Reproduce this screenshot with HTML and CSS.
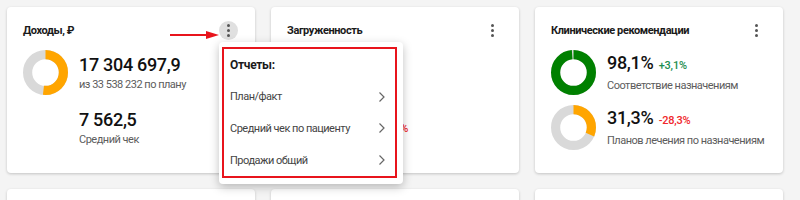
FILE: index.html
```html
<!DOCTYPE html>
<html lang="ru">
<head>
<meta charset="utf-8">
<title>Dashboard</title>
<link rel="stylesheet" href="styles.css">
</head>
<body>
<div class="grid">
  <div class="card">
    <div class="head">
      <div class="title">Доходы, ₽</div>
      <div class="kebab active"><i></i><i></i><i></i></div>
    </div>
    <div class="rows">
      <div class="row">
        <svg class="donut" viewBox="0 0 44 44">
          <circle cx="22" cy="22" r="17.5" fill="none" stroke="#d9d9d9" stroke-width="9"/>
          <circle cx="22" cy="22" r="17.5" fill="none" stroke="#ffa500" stroke-width="9" stroke-dasharray="56.7 110" transform="rotate(-90 22 22)"/>
        </svg>
        <div class="text">
          <div class="value">17 304 697,9</div>
          <div class="sub">из 33 538 232 по плану</div>
        </div>
      </div>
      <div class="row">
        <div class="donut"></div>
        <div class="text">
          <div class="value">7 562,5</div>
          <div class="sub">Средний чек</div>
        </div>
      </div>
    </div>
    <svg class="arrow" viewBox="0 0 50 10" width="50" height="10">
      <line x1="0" y1="5" x2="38" y2="5" stroke="#e8141c" stroke-width="2"/>
      <polygon points="36,1 49,5 36,9" fill="#e8141c"/>
    </svg>
    <div class="menu">
      <div class="menu-box">
        <div class="menu-row menu-head">Отчеты:</div>
        <div class="menu-row">План/факт<svg class="chev" viewBox="0 0 6 10" width="6" height="10"><polyline points="0.5,0.5 5,5 0.5,9.5" fill="none" stroke="#666" stroke-width="1.2"/></svg></div>
        <div class="menu-row">Средний чек по пациенту<svg class="chev" viewBox="0 0 6 10" width="6" height="10"><polyline points="0.5,0.5 5,5 0.5,9.5" fill="none" stroke="#666" stroke-width="1.2"/></svg></div>
        <div class="menu-row">Продажи общий<svg class="chev" viewBox="0 0 6 10" width="6" height="10"><polyline points="0.5,0.5 5,5 0.5,9.5" fill="none" stroke="#666" stroke-width="1.2"/></svg></div>
      </div>
    </div>
  </div>

  <div class="card">
    <div class="head">
      <div class="title">Загруженность</div>
      <div class="kebab"><i></i><i></i><i></i></div>
    </div>
    <div class="rows">
      <div class="row">
        <svg class="donut" viewBox="0 0 44 44">
          <circle cx="22" cy="22" r="17.5" fill="none" stroke="#d9d9d9" stroke-width="9"/>
          <circle cx="22" cy="22" r="17.5" fill="none" stroke="#008000" stroke-width="9" stroke-dasharray="80 110" transform="rotate(-90 22 22)"/>
        </svg>
        <div class="text">
          <div class="value">72,4%</div>
        </div>
      </div>
      <div class="row">
        <svg class="donut" viewBox="0 0 44 44">
          <circle cx="22" cy="22" r="17.5" fill="none" stroke="#d9d9d9" stroke-width="9"/>
          <circle cx="22" cy="22" r="17.5" fill="none" stroke="#ffa500" stroke-width="9" stroke-dasharray="50 110" transform="rotate(-90 22 22)"/>
        </svg>
        <div class="text">
          <div class="value">5,6% <span class="change down">-12%</span></div>
        </div>
      </div>
    </div>
  </div>

  <div class="card">
    <div class="head">
      <div class="title">Клинические рекомендации</div>
      <div class="kebab"><i></i><i></i><i></i></div>
    </div>
    <div class="rows">
      <div class="row">
        <svg class="donut" viewBox="0 0 44 44">
          <circle cx="22" cy="22" r="17.5" fill="none" stroke="#d9d9d9" stroke-width="9"/>
          <circle cx="22" cy="22" r="17.5" fill="none" stroke="#008000" stroke-width="9" stroke-dasharray="107.9 110" transform="rotate(-90 22 22)"/>
        </svg>
        <div class="text">
          <div class="value">98,1% <span class="change up">+3,1%</span></div>
          <div class="sub">Соответствие назначениям</div>
        </div>
      </div>
      <div class="row">
        <svg class="donut" viewBox="0 0 44 44">
          <circle cx="22" cy="22" r="17.5" fill="none" stroke="#d9d9d9" stroke-width="9"/>
          <circle cx="22" cy="22" r="17.5" fill="none" stroke="#ffa500" stroke-width="9" stroke-dasharray="34.4 110" transform="rotate(-90 22 22)"/>
        </svg>
        <div class="text">
          <div class="value">31,3% <span class="change down">-28,3%</span></div>
          <div class="sub">Планов лечения по назначениям</div>
        </div>
      </div>
    </div>
  </div>

  <div class="card"></div>
  <div class="card"></div>
  <div class="card"></div>
</div>
</body>
</html>
```

FILE: styles.css
```css
body {
  margin: 0;
  background: #f4f4f4;
  font-family: Roboto, "Noto Sans", sans-serif;
  color: #1a1a1a;
}

.grid {
  display: grid;
  grid-template-columns: repeat(3, 248px);
  gap: 16px;
  padding: 7px;
}

.card {
  position: relative;
  box-sizing: border-box;
  height: 166px;
  padding: 13px 17px 0 16px;
  background: #fff;
  border-radius: 4px;
  box-shadow: 0 1px 3px rgba(0, 0, 0, 0.2);
  white-space: nowrap;
}

.head {
  display: flex;
  justify-content: space-between;
  align-items: center;
  height: 20px;
}

.title {
  font-size: 11px;
  font-weight: 700;
  letter-spacing: -0.4px;
  color: #1a1a1a;
}

.kebab {
  width: 19px;
  height: 19px;
  border-radius: 50%;
  display: flex;
  flex-direction: column;
  align-items: center;
  justify-content: center;
  gap: 2px;
}

.kebab i {
  width: 3px;
  height: 3px;
  border-radius: 50%;
  background: #555;
}

.kebab.active {
  background: #e0e0e0;
}

.rows {
  margin-top: 10px;
  display: flex;
  flex-direction: column;
  gap: 10px;
}

.row {
  display: flex;
  align-items: center;
  gap: 11px;
  height: 45px;
}

.donut {
  width: 45px;
  height: 45px;
  flex: none;
}

.value {
  font-size: 18px;
  font-weight: 500;
  letter-spacing: -0.3px;
  line-height: 22px;
  color: #111;
}

.change {
  font-size: 11px;
  font-weight: 500;
  letter-spacing: -0.2px;
  margin-left: 1px;
}

.change.up { color: #1e8e50; }
.change.down { color: #f0282d; }

.sub {
  margin-top: 2px;
  font-size: 11px;
  letter-spacing: -0.5px;
  line-height: 14px;
  color: #5c5c5c;
}

.arrow {
  position: absolute;
  left: 163px;
  top: 23px;
}

.menu {
  position: absolute;
  left: 212px;
  top: 35px;
  z-index: 5;
  box-sizing: border-box;
  width: 184px;
  height: 142px;
  padding: 5px 6px 6px 3px;
  background: #fff;
  border-radius: 4px;
  box-shadow: 0 3px 10px rgba(0, 0, 0, 0.25);
}

.menu-box {
  box-sizing: border-box;
  height: 131px;
  border: 2px solid #e8141c;
  display: flex;
  flex-direction: column;
}

.menu-row {
  flex: 1;
  display: flex;
  align-items: center;
  justify-content: space-between;
  padding: 0 10px 0 6px;
  font-size: 11px;
  letter-spacing: -0.5px;
  color: #444;
}

.menu-head {
  font-size: 12px;
  font-weight: 700;
  letter-spacing: -0.3px;
  color: #1a1a1a;
}
```
